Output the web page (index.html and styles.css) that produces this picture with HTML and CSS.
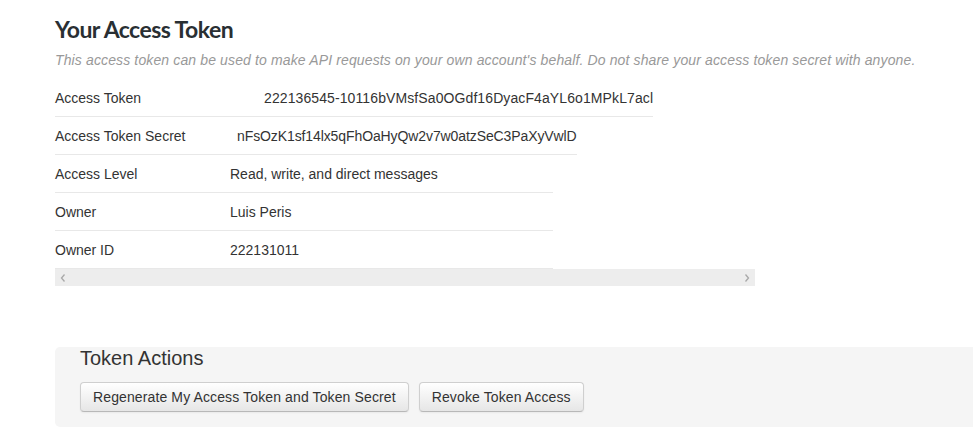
FILE: index.html
```html
<!DOCTYPE html>
<html>
<head>
<meta charset="utf-8">
<link rel="stylesheet" href="styles.css">
</head>
<body>
<div class="page">
  <h1 class="title">Your Access Token</h1>
  <p class="lead">This access token can be used to make API requests on your own account's behalf. Do not share your access token secret with anyone.</p>
  <div class="scroller">
    <div class="details">
      <div class="row row-token"><div class="label">Access Token</div><div class="value">222136545-10116bVMsfSa0OGdf16DyacF4aYL6o1MPkL7acl</div></div>
      <div class="row row-secret"><div class="label">Access Token Secret</div><div class="value">nFsOzK1sf14lx5qFhOaHyQw2v7w0atzSeC3PaXyVwlD</div></div>
      <div class="row row-std"><div class="label">Access Level</div><div class="value">Read, write, and direct messages</div></div>
      <div class="row row-std"><div class="label">Owner</div><div class="value">Luis Peris</div></div>
      <div class="row row-std"><div class="label">Owner ID</div><div class="value">222131011</div></div>
    </div>
    <div class="hbar">
      <svg class="chev" width="8" height="10" viewBox="0 0 8 10"><path d="M5.5 1.5 L2.5 5 L5.5 8.5" fill="none" stroke="#a8a8a8" stroke-width="1.3"/></svg>
      <svg class="chev" width="8" height="10" viewBox="0 0 8 10"><path d="M2.5 1.5 L5.5 5 L2.5 8.5" fill="none" stroke="#a8a8a8" stroke-width="1.3"/></svg>
    </div>
  </div>
  <div class="actions">
    <h2 class="actions-title">Token Actions</h2>
    <div class="buttons">
      <button class="btn">Regenerate My Access Token and Token Secret</button>
      <button class="btn">Revoke Token Access</button>
    </div>
  </div>
</div>
</body>
</html>
```
FILE: styles.css
```css
html, body {
  margin: 0;
  padding: 0;
  overflow: hidden;
  background: #fff;
}
body {
  font-family: "Liberation Sans", Arial, sans-serif;
  font-size: 14px;
  color: #333;
}
.page {
  padding: 14px 0 0 55px;
  width: 918px;
}
.title {
  margin: 0;
  font-family: "Lato", "Liberation Sans", sans-serif;
  font-weight: 700;
  font-size: 23px;
  line-height: 30px;
  color: #292f33;
  letter-spacing: -0.55px;
}
.lead {
  margin: 6px 0 0;
  font-style: italic;
  color: #999;
  line-height: 20px;
  letter-spacing: 0.13px;
}
.scroller {
  margin-top: 9px;
  width: 700px;
}
.details {
  display: flex;
  flex-direction: column;
  align-items: flex-start;
}
.row {
  display: flex;
  height: 37px;
  align-items: center;
  border-bottom: 1px solid #e8e8e8;
  line-height: 20px;
}
.row-token .label { width: 209px; }
.row-token .value { letter-spacing: 0.1px; }
.row-secret .label { width: 182px; }
.row-secret .value { letter-spacing: -0.1px; }
.row-std .label { width: 175px; }
.row-std .value { width: 323px; }
.hbar {
  height: 17px;
  background: #ededed;
  display: flex;
  justify-content: space-between;
  align-items: center;
  padding: 0 4px;
}
.chev { display: block; }
.actions {
  margin-top: 61px;
  background: #f5f5f5;
  border-radius: 5px 0 0 5px;
  padding: 0 0 15px 25px;
}
.actions-title {
  margin: 0;
  font-size: 20px;
  font-weight: 400;
  line-height: 22px;
  color: #333;
}
.buttons {
  display: flex;
  gap: 10px;
  margin-top: 13px;
}
.btn {
  font-family: "Liberation Sans", Arial, sans-serif;
  font-size: 14px;
  letter-spacing: 0.12px;
  color: #333;
  height: 30px;
  padding: 0 12px;
  border: 1px solid #cfcfcf;
  border-bottom-color: #b8b8b8;
  border-radius: 4px;
  background: linear-gradient(#ffffff, #e6e6e6);
  box-shadow: 0 1px 2px rgba(0,0,0,0.05);
}
```
